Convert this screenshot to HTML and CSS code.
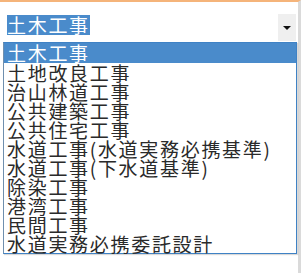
FILE: index.html
```html
<!DOCTYPE html>
<html lang="ja">
<head>
  <meta charset="UTF-8">
  <meta name="viewport" content="width=device-width, initial-scale=1.0">
  <title>工事種別</title>
  <link rel="stylesheet" href="styles.css">
</head>
<body>
  <div class="frame">
    <div class="select">
      <span class="select-value">土木工事</span>
      <span class="select-btn"><span class="arrow"></span></span>
    </div>
    <ul class="options">
      <li class="option selected">土木工事</li>
      <li class="option">土地改良工事</li>
      <li class="option">治山林道工事</li>
      <li class="option">公共建築工事</li>
      <li class="option">公共住宅工事</li>
      <li class="option">水道工事(水道実務必携基準)</li>
      <li class="option">水道工事(下水道基準)</li>
      <li class="option">除染工事</li>
      <li class="option">港湾工事</li>
      <li class="option">民間工事</li>
      <li class="option">水道実務必携委託設計</li>
    </ul>
  </div>
</body>
</html>
```

FILE: styles.css
```css
body {
  margin: 0;
  background: #fff;
  font-family: "Noto Sans CJK JP", "Noto Sans", sans-serif;
}
.frame {
  width: 301px;
  height: 273px;
  box-sizing: border-box;
  border-top: 2px solid #f5b47a;
  border-right: 3px solid #dadada;
  padding-top: 12px;
  background: #fff;
}
.select {
  display: flex;
  justify-content: space-between;
  align-items: flex-start;
  height: 28px;
  padding-left: 7px;
  padding-right: 2px;
}
.select-value {
  margin-top: 1px;
  background: #4a8bcb;
  color: #fff;
  font-size: 19px;
  letter-spacing: 1.7px;
  line-height: 20px;
  height: 20px;
}
.select-btn {
  width: 18px;
  height: 27px;
  background: #efefef;
  display: flex;
  align-items: center;
  justify-content: center;
}
.arrow {
  width: 0;
  height: 0;
  border-left: 4px solid transparent;
  border-right: 4px solid transparent;
  border-top: 4px solid #111;
  margin-top: 1px;
}
.options {
  list-style: none;
  margin: 0 0 0 3px;
  padding: 0;
  width: 294px;
  box-sizing: border-box;
  border: 1px solid #3f82c5;
  border-left-color: #6f8fae;
  box-shadow: 1px 1px 1px rgba(0, 0, 0, 0.15);
}
.option {
  height: 19px;
  line-height: 19px;
  font-size: 19px;
  letter-spacing: 1.7px;
  padding-left: 3px;
  color: #2a2a2a;
  white-space: nowrap;
}
.option.selected {
  height: 20px;
  line-height: 20px;
  background: #4a8bcb;
  color: #fff;
}
```
